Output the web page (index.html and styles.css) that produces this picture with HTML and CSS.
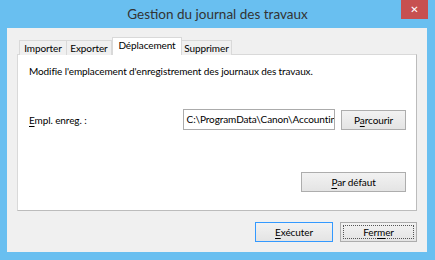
FILE: index.html
```html
<!DOCTYPE html>
<html lang="fr">
<head>
  <meta charset="UTF-8">
  <title>Gestion du journal des travaux</title>
  <link rel="stylesheet" href="styles.css">
</head>
<body>
  <div class="window">
    <div class="titlebar">
      <h1>Gestion du journal des travaux</h1>
      <button class="close">&#x2715;</button>
    </div>
    <div class="client">
      <ul class="tabs">
        <li class="tab t1">Importer</li>
        <li class="tab t2">Exporter</li>
        <li class="tab t3 on">Déplacement</li>
        <li class="tab t4">Supprimer</li>
      </ul>
      <div class="panel">
        <p class="desc">Modifie l'emplacement d'enregistrement des journaux des travaux.</p>
        <div class="row">
          <label class="lbl"><u>E</u>mpl. enreg. :</label>
          <div class="field">C:\ProgramData\Canon\Accountin</div>
          <button class="btn browse">P<u>a</u>rcourir</button>
        </div>
        <div class="row end">
          <button class="btn dflt"><u>P</u>ar défaut</button>
        </div>
      </div>
      <div class="actions">
        <button class="btn run"><u>E</u>xécuter</button>
        <button class="btn close-btn"><span>Fer<u>m</u>er</span></button>
      </div>
    </div>
  </div>
</body>
</html>
```

FILE: styles.css
```css
html, body{  margin: 0;  padding: 0;  width: 435px;  height: 260px;  overflow: hidden;  }
body{  background: #69bff0;  font-family: "Lato", "Liberation Sans", sans-serif;  font-size: 10px;  letter-spacing: -0.1px;  color: #000;  }
*{  box-sizing: border-box;  }
h1, p, ul{  margin: 0;  padding: 0;  }
u{  text-decoration-thickness: 1px;  text-underline-offset: 2px;  }

.window{  width: 435px;  height: 260px;  display: flex;  flex-direction: column;  }
.titlebar{
  height: 28px;  flex: none;  position: relative;  display: flex;  justify-content: center;  align-items: center;
}
.titlebar h1{  font-weight: normal;  font-size: 13.5px;  letter-spacing: 0;  color: #333;  margin-top: -1px;  }
.titlebar .close{
  position: absolute;  right: 7px;  top: 0;  width: 27px;  height: 19px;
  border: 0;  padding: 0;  background: #c75050;  color: #fff;  font-size: 10px;  font-weight: bold;
  font-family: "DejaVu Sans", sans-serif;
}

.client{
  height: 224px;  margin: 0 8px 0 7px;  background: #f0f0f0;
  padding: 9px 10px 0 10px;  display: flex;  flex-direction: column;
}

.tabs{
  list-style: none;  display: flex;  height: 18px;  margin-bottom: -1px;  padding-left: 2px;
  align-items: flex-end;  position: relative;  z-index: 1;  flex: none;
}
.tab{
  flex: none;  height: 15px;  border: 1px solid #d9d9d9;  border-bottom: 0;  background: #f0f0f0;
  line-height: 15px;  text-align: center;
}
.t1{  width: 48px;  }
.t2{  width: 46px;  margin-left: -1px;  }
.t3{  width: 70px;  }
.t4{  width: 50px;  border-left: 0;  }
.tab.on{  height: 18px;  background: #fff;  line-height: 15px;  border-color: #d9d9d9;  }

.panel{
  height: 157px;  flex: none;  background: #fff;  border: 1px solid #d9d9d9;  border-right-color: #bcbcbc;  border-bottom-color: #bcbcbc;
  padding: 9px 10px 0 11px;  display: flex;  flex-direction: column;
}
.desc{  line-height: 14px;  }
.row{  display: flex;  align-items: center;  margin-top: 31px;  }
.lbl{  width: 154px;  }
.field{
  width: 153px;  height: 21px;  border: 1px solid #ababab;  overflow: hidden;  white-space: nowrap;
  line-height: 19px;  padding-left: 3px;  margin-right: 6px;
}
.btn{
  height: 20px;  border: 1px solid #adadad;  background: linear-gradient(#f2f2f2, #e4e4e4);
  font-family: inherit;  font-size: 10px;  letter-spacing: -0.1px;  color: #000;  padding: 0;
}
.browse{  width: 65px;  }
.row.end{  justify-content: flex-end;  margin-top: 42px;  }
.dflt{  width: 105px;  }

.actions{  display: flex;  justify-content: flex-end;  gap: 7px;  margin-top: 11px;  }
.run{  width: 78px;  border-color: #3399ff;  }
.close-btn{  width: 77px;  padding: 2px;  }
.close-btn span{  display: block;  height: 14px;  line-height: 13px;  border: 1px dotted #555;  }
```
